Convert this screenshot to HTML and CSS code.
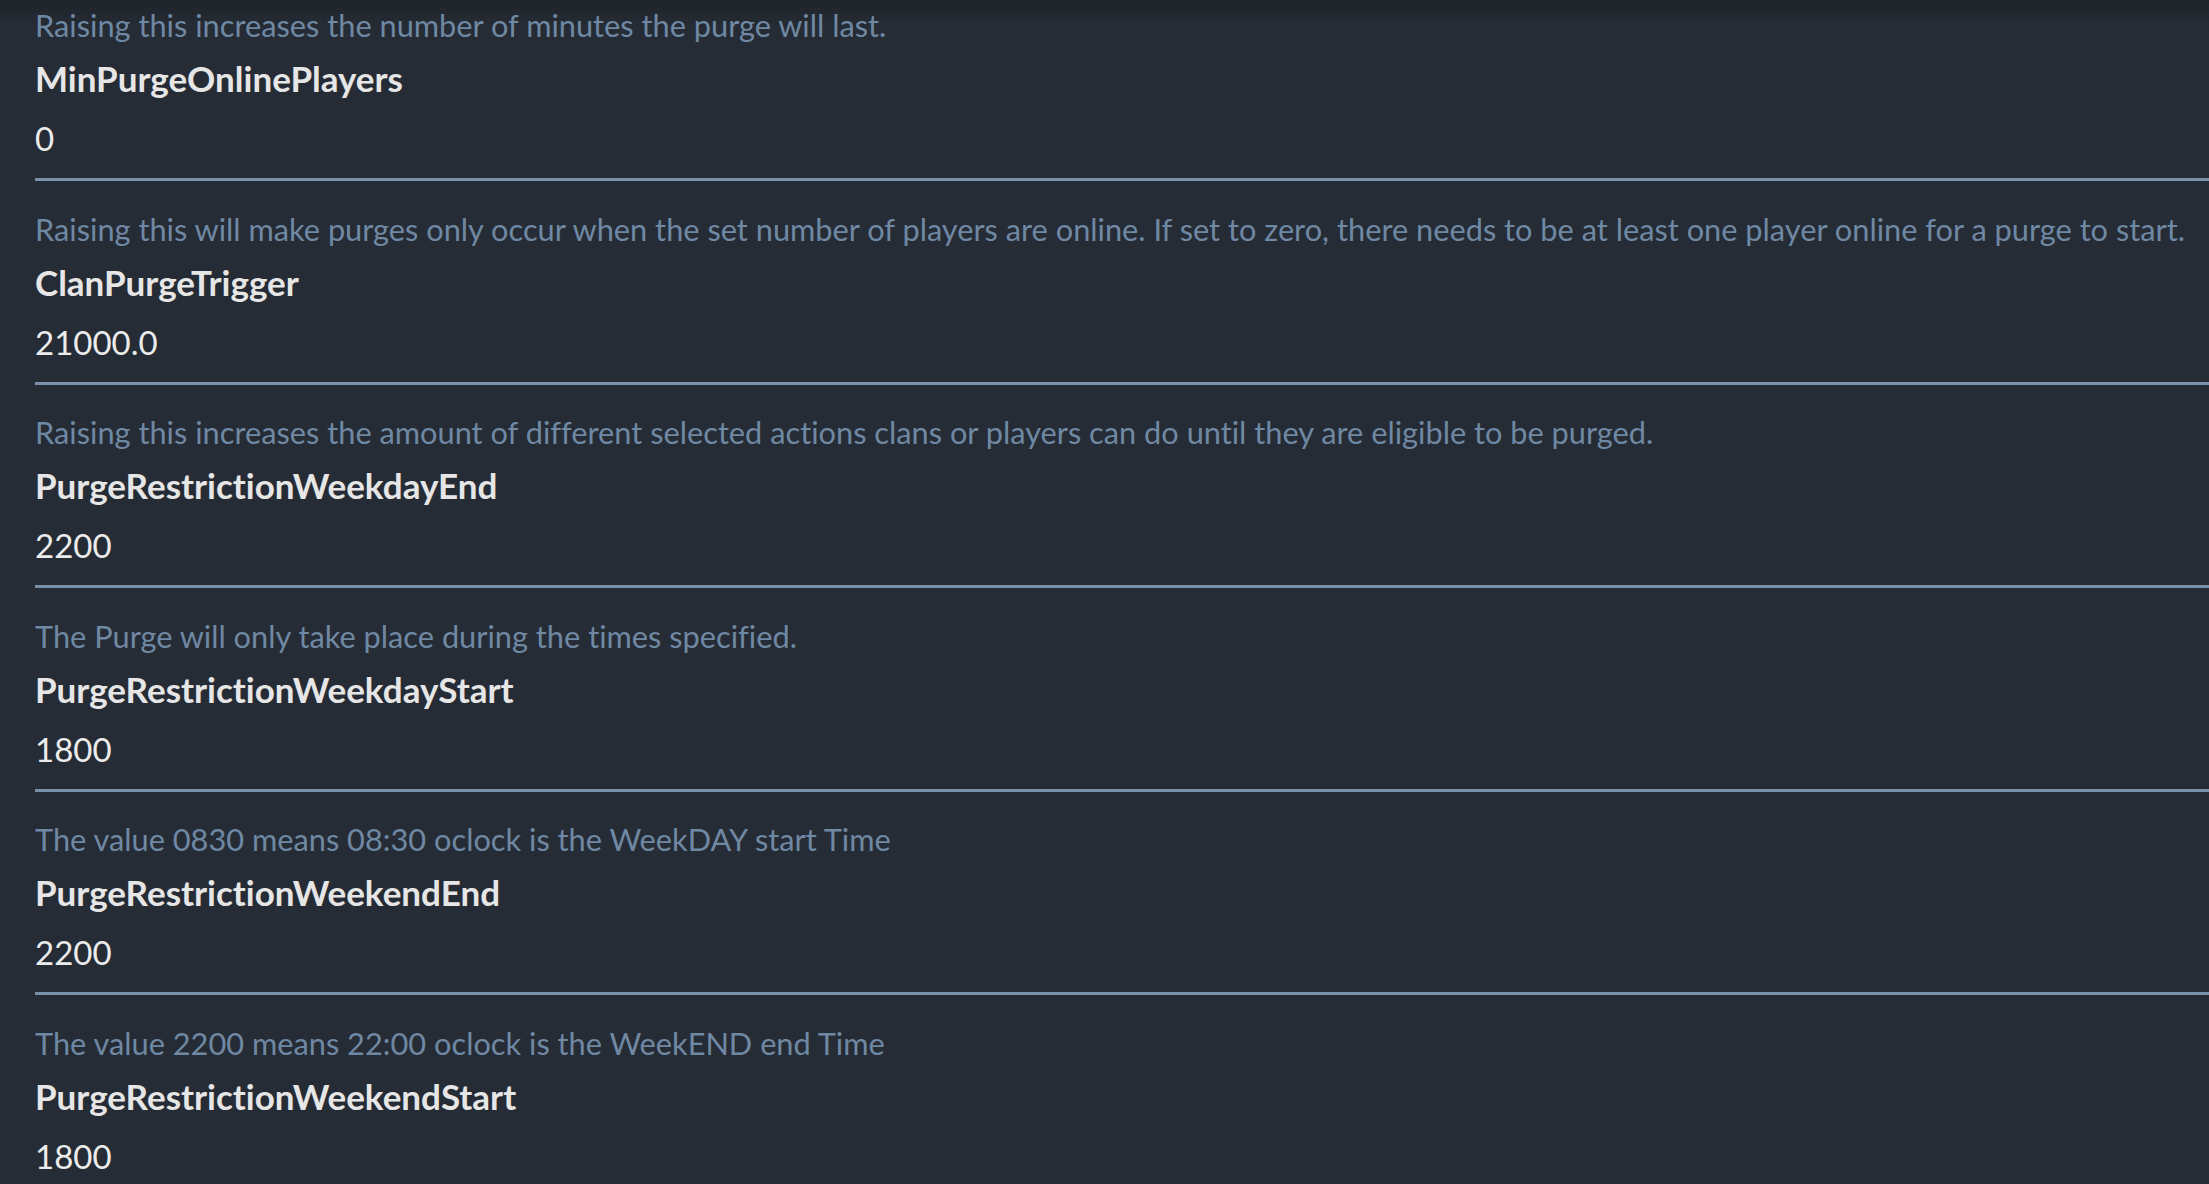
FILE: index.html
```html
<!DOCTYPE html>
<html lang="en">
<head>
<meta charset="utf-8">
<title>Purge settings</title>
<link rel="stylesheet" href="styles.css">
</head>
<body>
<div class="settings">
  <section class="setting">
    <p class="desc">Raising this increases the number of minutes the purge will last.</p>
    <h3 class="name">MinPurgeOnlinePlayers</h3>
    <div class="value">0</div>
  </section>
  <section class="setting">
    <p class="desc">Raising this will make purges only occur when the set number of players are online. If set to zero, there needs to be at least one player online for a purge to start.</p>
    <h3 class="name">ClanPurgeTrigger</h3>
    <div class="value">21000.0</div>
  </section>
  <section class="setting">
    <p class="desc">Raising this increases the amount of different selected actions clans or players can do until they are eligible to be purged.</p>
    <h3 class="name">PurgeRestrictionWeekdayEnd</h3>
    <div class="value">2200</div>
  </section>
  <section class="setting">
    <p class="desc">The Purge will only take place during the times specified.</p>
    <h3 class="name">PurgeRestrictionWeekdayStart</h3>
    <div class="value">1800</div>
  </section>
  <section class="setting">
    <p class="desc">The value 0830 means 08:30 oclock is the WeekDAY start Time</p>
    <h3 class="name">PurgeRestrictionWeekendEnd</h3>
    <div class="value">2200</div>
  </section>
  <section class="setting">
    <p class="desc">The value 2200 means 22:00 oclock is the WeekEND end Time</p>
    <h3 class="name">PurgeRestrictionWeekendStart</h3>
    <div class="value">1800</div>
  </section>
</div>
</body>
</html>
```
FILE: styles.css
```css
html, body {
  margin: 0;
  padding: 0;
}
body {
  background: linear-gradient(to bottom, #1f242b 0px, #262c35 28px, #262c35 100%);
  background-color: #262c35;
  font-family: Lato, "Open Sans", sans-serif;
  font-variant-ligatures: none;
  overflow: hidden;
  height: 1184px;
}
.settings {
  margin-top: -22.5px;
  padding-left: 35px;
}
.setting {
  padding-top: 26.5px;
  padding-bottom: 9.6px;
  border-bottom: 3px solid #7990a8;
}
.desc {
  margin: 0;
  font-size: 30.75px;
  line-height: 44px;
  color: #6f88a3;
  white-space: nowrap;
}
.name {
  margin: 0;
  font-size: 35px;
  line-height: 60px;
  font-weight: 700;
  color: #e6e6e6;
}
.value {
  font-size: 33px;
  line-height: 60.4px;
  color: #ececec;
}
```
